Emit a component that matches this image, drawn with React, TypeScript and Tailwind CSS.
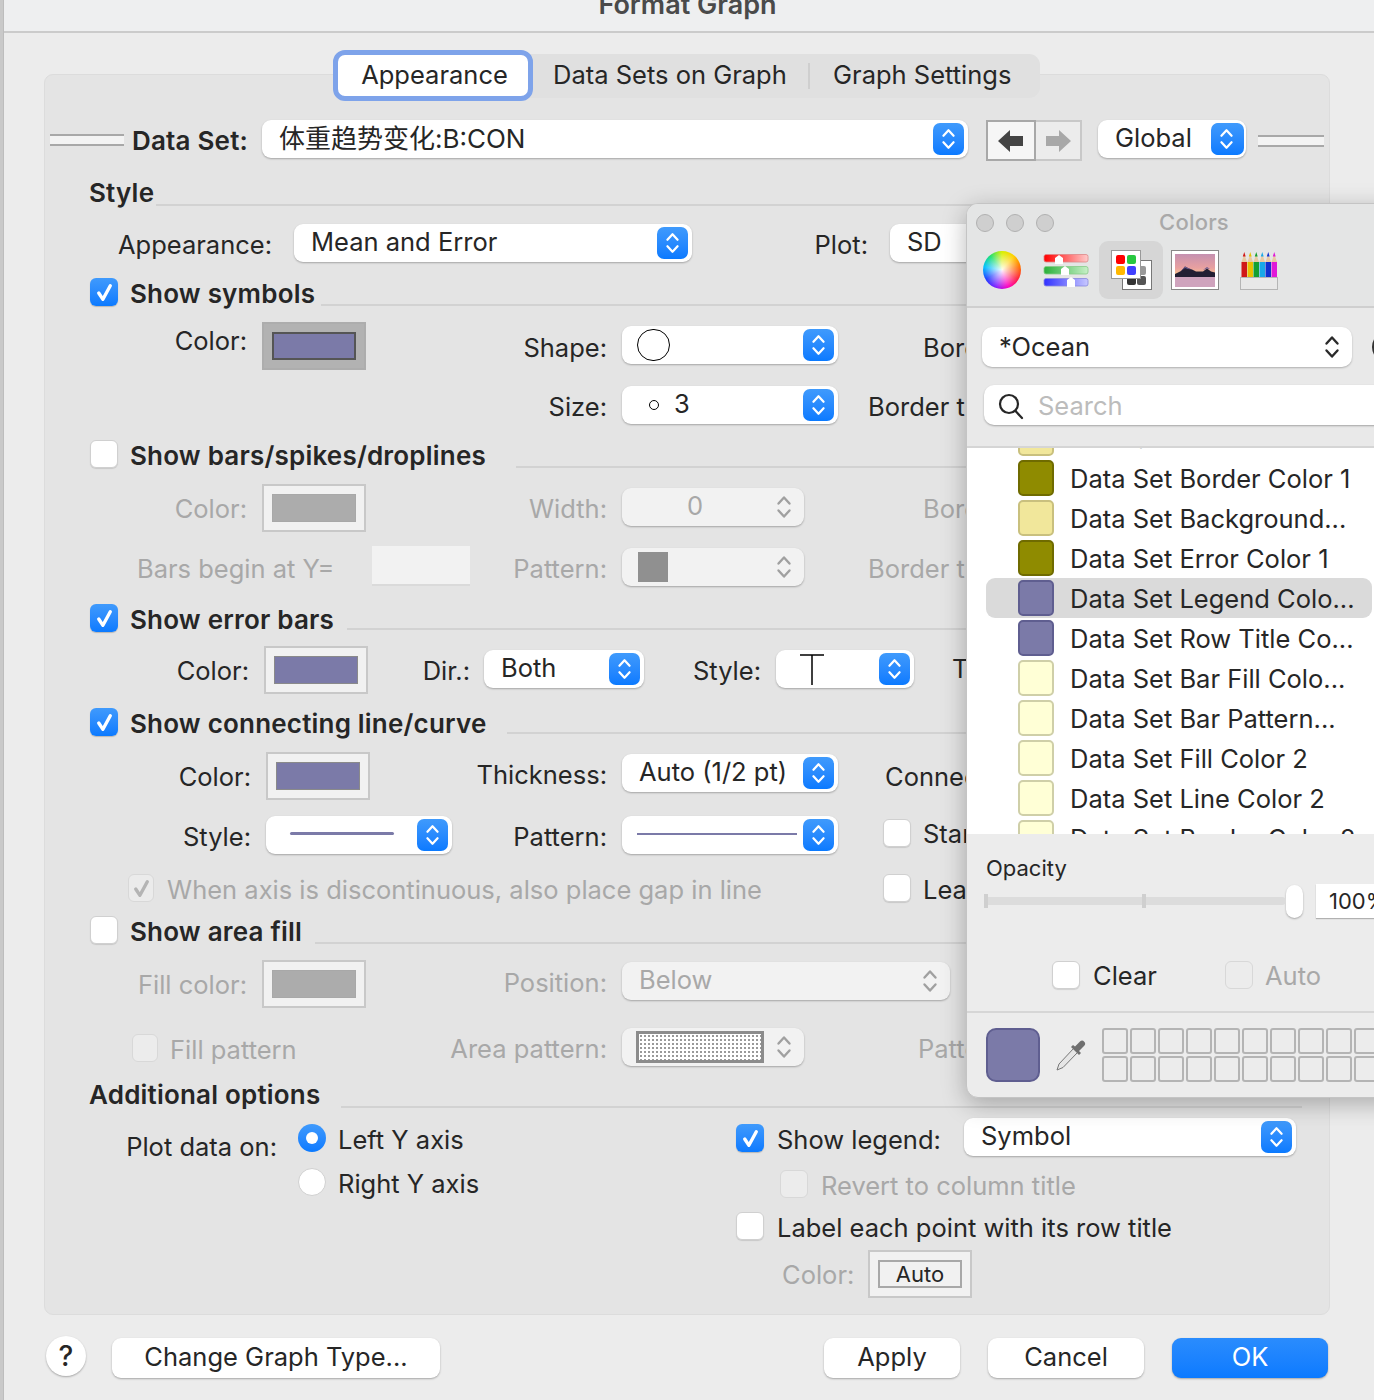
import type { ReactNode } from "react";
import clsx from "clsx";

const PURPLE = "bg-[#7b7aa8]";
const BOLD = "font-semibold text-[26px] tracking-[0.2px]";

const Lbl = ({ children, dim, className }: { children: ReactNode; dim?: boolean; className?: string }) => (
  <span className={clsx("block shrink-0 whitespace-nowrap text-right leading-[30px]", dim ? "text-[#a8a8a8]" : "text-[#262626]", className)}>
    {children}
  </span>
);

const Chevrons = ({ color = "white", className }: { color?: string; className?: string }) => (
  <svg viewBox="0 0 16 26" className={className} fill="none" stroke={color} strokeWidth="2.4" strokeLinecap="round" strokeLinejoin="round">
    <path d="M2.5 9.5 8 3.5l5.5 6" />
    <path d="M2.5 16.5 8 22.5l5.500-6" />
  </svg>
);

const Select = ({ children, disabled, className }: { children?: ReactNode; disabled?: boolean; className?: string }) => (
  <div className={clsx("relative flex h-[38px] shrink-0 items-center whitespace-nowrap rounded-[9px] pb-[1px] pl-[17px] shadow-[0_1px_2px_rgba(0,0,0,0.28)]", disabled ? "bg-[#f2f2f2] text-[#a8a8a8]" : "bg-white text-[#262626]", className)}>
    {children}
    {disabled ? (
      <Chevrons color="#a0a0a0" className="absolute right-[12px] top-[6px] h-[26px] w-[16px]" />
    ) : (
      <div className="absolute right-[4px] top-[3px] flex h-[32px] w-[31px] items-center justify-center rounded-[7px] bg-gradient-to-b from-[#3f9afc] to-[#0a7aff]">
        <Chevrons className="h-[24px] w-[15px]" />
      </div>
    )}
  </div>
);

const Check = ({ on, off, tick, className }: { on?: boolean; off?: boolean; tick?: boolean; className?: string }) => (
  <div className={clsx("flex h-[28px] w-[28px] shrink-0 items-center justify-center rounded-[6px]", on ? "bg-gradient-to-b from-[#3f9afc] to-[#0a7aff] shadow-[0_1px_1px_rgba(0,0,0,0.2)]" : off ? "border border-[#d8d8d8] bg-[#ececec]" : "border border-[#d0d0d0] bg-white shadow-[0_1px_1px_rgba(0,0,0,0.12)]", className)}>
    {(on || tick) && (
      <svg viewBox="0 0 20 20" className="h-[21px] w-[21px]" fill="none" stroke={on ? "white" : "#b4b4b4"} strokeWidth="3.2" strokeLinecap="round" strokeLinejoin="round">
        <path d="M4.500 10.500 8.500 16.500 15.500 3.500" />
      </svg>
    )}
  </div>
);

const Radio = ({ on }: { on?: boolean }) => (
  <div className={clsx("flex h-[28px] w-[28px] shrink-0 items-center justify-center rounded-full", on ? "bg-gradient-to-b from-[#3f9afc] to-[#0a7aff]" : "border border-[#d0d0d0] bg-white")}>
    {on && <div className="h-[12px] w-[12px] rounded-full bg-white" />}
  </div>
);

const Well = ({ selected, dim, className, children }: { selected?: boolean; dim?: boolean; className?: string; children?: ReactNode }) => (
  <div className={clsx("flex h-[48px] w-[104px] shrink-0 items-center justify-center border-2", selected ? "border-[#adadad] bg-[#b2b2b2]" : "border-[#c8c8c8] bg-[#f1f1f1]", className)}>
    {children ?? <div className={clsx("h-[28px] w-[84px] border", dim ? "border-[#a8a8a8] bg-[#acacac]" : PURPLE, !dim && (selected ? "border-2 border-[#555555]" : "border-[#8a8a8a]"))} />}
  </div>
);

const Double = ({ className }: { className?: string }) => (
  <div className={clsx("h-[12px] shrink-0 border-y-2 border-[#a8a8a8] bg-[#f3f3f3]", className)} />
);

const Rule = ({ className }: { className?: string }) => <div className={clsx("h-[2px] flex-1 bg-[#d2d2d2]", className)} />;

const Section = ({ on, label, labelWidth, ruleTop, h }: { on?: boolean; label: string; labelWidth: string; ruleTop: string; h: string }) => (
  <div className={clsx("flex", h)}>
    <Check on={on} className="ml-[40px]" />
    <Lbl className={clsx("ml-[12px] mt-[1px] !text-left", BOLD, labelWidth)}>{label}</Lbl>
    <Rule className={ruleTop} />
  </div>
);

const ColorWheel = () => (
  <div className="relative h-[38px] w-[38px] rounded-full bg-[conic-gradient(#d8f000,#ffd000,#ff7000,#ff2040,#ff00c0,#8020ff,#2040ff,#00c0ff,#20e070,#d8f000)]">
    <div className="absolute inset-0 rounded-full bg-[radial-gradient(circle,rgba(255,255,255,0.95)_0%,rgba(255,255,255,0)_68%)]" />
  </div>
);

const SlidersIcon = () => (
  <svg width="46" height="36" viewBox="0 0 46 36">
    <defs>
      <linearGradient id="sr"><stop offset="0" stopColor="#f00" /><stop offset="1" stopColor="#fcc" /></linearGradient>
      <linearGradient id="sg"><stop offset="0" stopColor="#2ab03a" /><stop offset="1" stopColor="#c8f0c8" /></linearGradient>
      <linearGradient id="sb"><stop offset="0" stopColor="#3030ff" /><stop offset="1" stopColor="#c8c8ff" /></linearGradient>
    </defs>
    <rect x="1" y="2.500" width="44" height="7.500" rx="2" fill="url(#sr)" stroke="#d88" strokeWidth="0.8" />
    <rect x="1" y="14.500" width="44" height="7.500" rx="2" fill="url(#sg)" stroke="#8c8" strokeWidth="0.8" />
    <rect x="1" y="26.500" width="44" height="7.500" rx="2" fill="url(#sb)" stroke="#88d" strokeWidth="0.8" />
    <path d="M16 3l4 3v6h-8V6zM22 14l4 3v6h-8v-6zM28 25l4 3v7h-8v-7z" fill="white" />
  </svg>
);

const PaletteIcon = () => (
  <svg width="42" height="40" viewBox="0 0 42 40">
    <rect x="11.500" y="10.500" width="29" height="29" fill="white" stroke="#777" />
    <rect x="26" y="16" width="9" height="9" rx="2" fill="#999" />
    <rect x="16" y="26" width="9" height="9" rx="2" fill="#333" />
    <rect x="26" y="26" width="9" height="9" rx="2" fill="#555" />
    <rect x="0.500" y="0.500" width="29" height="28" fill="white" stroke="#999" />
    <rect x="5" y="5" width="9" height="9" rx="2" fill="#ff0000" />
    <rect x="16" y="5" width="9" height="9" rx="2" fill="#28c840" />
    <rect x="5" y="16" width="9" height="9" rx="2" fill="#ffb800" />
    <rect x="16" y="16" width="9" height="9" rx="2" fill="#4040ff" />
  </svg>
);

const ImageIcon = () => (
  <svg width="48" height="40" viewBox="0 0 48 40">
    <defs>
      <linearGradient id="sky" x2="0" y2="1"><stop offset="0" stopColor="#c490b0" /><stop offset="0.6" stopColor="#e8a0a0" /><stop offset="1" stopColor="#fbd08a" /></linearGradient>
    </defs>
    <rect x="0.500" y="0.500" width="47" height="39" fill="white" stroke="#888" />
    <rect x="4" y="4" width="40" height="23" fill="url(#sky)" />
    <rect x="4" y="27" width="40" height="10" fill="#cfa3bd" />
    <path d="M4 27v-3l6-3 4-4.500 4 2 3 1 4 2 7 0 4-3 4 3 4 1v4.500z" fill="#231f33" />
    <path d="M10 21l4-4.500 4 2 3 1-4-.5-3-1zM32 20l4-3 3 2-3-.5z" fill="#6a5a90" />
  </svg>
);

const PencilsIcon = () => {
  const cols = ["#d01818", "#e8c000", "#14a030", "#18a8e8", "#1030d0", "#e018d8"];
  return (
    <svg width="38" height="40" viewBox="0 0 38 40">
      {cols.map((c, i) => (
        <g key={c}>
          <rect x={1.5 + i * 6} y="12" width="5.500" height="15" fill={c} />
          <path d={`M${1.5 + i * 6} 12l2.750-8 2.750 8z`} fill="#e9c9a0" />
          <path d={`M${2.8 + i * 6} 6.500l1.450-4.500 1.450 4.500z`} fill={c} />
        </g>
      ))}
      <rect x="0.500" y="27.500" width="37" height="12" fill="#e8e8e8" stroke="#b5b5b5" />
    </svg>
  );
};

const Eyedropper = () => (
  <svg width="32" height="32" viewBox="0 0 32 32">
    <path d="M19 9 23 13 8 28.500 2 31 4 25z" fill="#e6e6e6" stroke="#777" strokeWidth="1" />
    <path d="M16 8l8 8 2-2-2-2 5-5a3 3 0 0 0-4-4.500L20 7.500 18 6z" fill="#6f6f6f" />
  </svg>
);

const swatches: [string, string, string][] = [
  ["Data Set Line Color 1", "bg-[#f1e79b] border-[#c9c07e]", ""],
  ["Data Set Border Color 1", "bg-[#8f8b00] border-[#6f6b00]", ""],
  ["Data Set Background...", "bg-[#f1e79b] border-[#c9c07e]", ""],
  ["Data Set Error Color 1", "bg-[#8f8b00] border-[#6f6b00]", ""],
  ["Data Set Legend Colo...", "bg-[#7b7aa8] border-[#5f5e90]", "bg-[#dadada]"],
  ["Data Set Row Title Co...", "bg-[#7b7aa8] border-[#5f5e90]", ""],
  ["Data Set Bar Fill Colo...", "bg-[#ffffd6] border-[#cfcfa8]", ""],
  ["Data Set Bar Pattern...", "bg-[#ffffd6] border-[#cfcfa8]", ""],
  ["Data Set Fill Color 2", "bg-[#ffffd6] border-[#cfcfa8]", ""],
  ["Data Set Line Color 2", "bg-[#ffffd6] border-[#cfcfa8]", ""],
  ["Data Set Border Color 2", "bg-[#ffffd6] border-[#cfcfa8]", ""],
];

const ColorsPanel = () => (
  <div className="absolute left-[966px] top-[203px] z-20 flex h-[895px] w-[456px] flex-col overflow-hidden rounded-[12px] border border-[#c4c4c4] bg-[#ececec] shadow-[0_6px_24px_rgba(0,0,0,0.28)]">
    <div className="h-[104px] shrink-0 border-b-2 border-[#cfcfcf] bg-[#e4e5e5]">
      <div className="relative flex h-[37px] items-center pl-[9px]">
        <div className="flex gap-[12px]">
          <div className="h-[18px] w-[18px] rounded-full border border-[#b0b0b0] bg-[#cfcfcf]" />
          <div className="h-[18px] w-[18px] rounded-full border border-[#b0b0b0] bg-[#cfcfcf]" />
          <div className="h-[18px] w-[18px] rounded-full border border-[#b0b0b0] bg-[#cfcfcf]" />
        </div>
        <span className="absolute inset-x-0 text-center text-[22px] font-medium tracking-[0.2px] text-[#a9a9a9]">Colors</span>
      </div>
      <div className="flex items-center pl-[16px]">
        <ColorWheel />
        <div className="ml-[22px]"><SlidersIcon /></div>
        <div className="ml-[10px] flex h-[58px] w-[64px] items-center justify-center rounded-[9px] bg-[#d6d6d6] pl-[1px]"><PaletteIcon /></div>
        <div className="ml-[8px]"><ImageIcon /></div>
        <div className="ml-[21px]"><PencilsIcon /></div>
      </div>
    </div>
    <div className="relative h-[138px] shrink-0 bg-[#e9e9e9]">
      <div className="ml-[15px] mt-[19px] flex h-[40px] w-[370px] items-center justify-between rounded-[10px] bg-white pl-[17px] pr-[12px] text-[#262626] shadow-[0_1px_2px_rgba(0,0,0,0.25)]">
        <span>*Ocean</span>
        <Chevrons color="#2a2a2a" className="h-[26px] w-[16px]" />
      </div>
      <div className="absolute left-[405px] top-[23px] h-[32px] w-[32px] rounded-full border-2 border-[#333333]" />
      <div className="ml-[17px] mt-[18px] flex h-[40px] w-[440px] items-center rounded-[10px] bg-white pl-[14px] pt-[2px] text-[#bcbcbc] shadow-[0_1px_2px_rgba(0,0,0,0.3)]">
        <svg width="26" height="28" viewBox="0 0 26 28" fill="none" stroke="#262626" strokeWidth="2.200" strokeLinecap="round">
          <circle cx="11" cy="12" r="9" />
          <path d="M17.500 19 24 26" />
        </svg>
        <span className="ml-[14px]">Search</span>
      </div>
    </div>
    <div className="h-[388px] shrink-0 overflow-hidden border-t-2 border-[#d5d5d5] bg-white">
      <div className="-mt-[30px]">
        {swatches.map(([name, sw, row]) => (
          <div key={name} className={clsx("ml-[19px] flex h-[40px] w-[386px] items-center rounded-[9px] pl-[32px]", row)}>
            <div className={clsx("h-[36px] w-[36px] shrink-0 rounded-[5px] border-2", sw)} />
            <span className="ml-[16px] mt-[2px] whitespace-nowrap text-[#262626]">{name}</span>
          </div>
        ))}
      </div>
    </div>
    <div className="flex flex-1 flex-col">
      <div className="ml-[19px] mt-[19px] text-[22px] leading-[30px] text-[#262626]">Opacity</div>
      <div className="ml-[17px] mt-[1px] flex h-[34px] items-center">
        <div className="relative h-[8px] w-[302px] rounded-full bg-[#dcdcdc]">
          <div className="absolute -top-[3px] left-0 h-[14px] w-[4px] bg-[#cfcfcf]" />
          <div className="absolute -top-[3px] left-[158px] h-[14px] w-[4px] bg-[#cfcfcf]" />
        </div>
        <div className="h-[33px] w-[17px] rounded-full bg-white shadow-[0_1px_2px_rgba(0,0,0,0.3)]" />
        <div className="ml-[13px] flex h-[34px] w-[80px] items-center bg-white pl-[13px] text-[22px] leading-none text-[#262626] shadow-[0_1px_1px_rgba(0,0,0,0.25)]">100%</div>
      </div>
      <div className="ml-[85px] mt-[43px] flex h-[28px] items-center">
        <Check />
        <span className="ml-[13px] mt-[2px] w-[62px] text-[#262626]">Clear</span>
        <Check off className="ml-[70px]" />
        <span className="ml-[12px] mt-[2px] text-[#a8a8a8]">Auto</span>
      </div>
      <div className="mt-[22px] h-[2px] bg-[#d6d6d6]" />
      <div className="ml-[19px] mt-[15px] flex items-start">
        <div className="h-[54px] w-[54px] shrink-0 rounded-[10px] border-2 border-[#5f5e90] bg-[#7b7aa8]" />
        <div className="ml-[15px] mt-[11px] shrink-0"><Eyedropper /></div>
        <div className="ml-[15px] grid grid-cols-[repeat(11,26px)] gap-[2px]">
          {Array.from({ length: 22 }, (_, i) => (
            <div key={i} className="h-[26px] w-[26px] rounded-[3px] border-2 border-[#b4b4b4]" />
          ))}
        </div>
      </div>
    </div>
  </div>
);

const Button = ({ children, className }: { children: ReactNode; className?: string }) => (
  <div className={clsx("flex h-[40px] shrink-0 items-center justify-center whitespace-nowrap rounded-[9px] bg-white pb-[2px] text-[#262626] shadow-[0_1px_2px_rgba(0,0,0,0.3)]", className)}>
    {children}
  </div>
);

export default function App() {
  return (
    <div className="relative flex h-[1400px] w-[1374px] overflow-hidden bg-[#c9c9c9] font-['Inter','Noto_Sans_CJK_SC',sans-serif] text-[25.5px]">
      <div className="ml-[3px] w-[1371px] shrink-0 border-l border-[#bdbdbd] bg-[#ececec]">
        <div className="flex h-[33px] items-end justify-center overflow-hidden border-b-2 border-[#cbcbcb] bg-[#eeeff0] pb-[11px]">
          <span className="-ml-[3px] shrink-0 text-[27px] font-semibold leading-[30px] text-[#4a4a4a]">Format Graph</span>
        </div>

        <div className="relative z-10 ml-[329px] mt-[17px] flex h-[51px] items-center">
          <div className="relative z-10 flex h-[51px] w-[200px] items-center justify-center rounded-[12px] border-[5px] border-[#7ea3ea] bg-white pl-[3px] text-[#262626]">Appearance</div>
          <div className="-ml-[8px] flex h-[44px] w-[515px] items-center rounded-r-[11px] bg-[#e0e0e0] pl-[28px] text-[#262626]">
            <span className="w-[255px] whitespace-nowrap">Data Sets on Graph</span>
            <div className="h-[26px] w-[2px] bg-[#cfcfcf]" />
            <span className="ml-[23px] whitespace-nowrap">Graph Settings</span>
          </div>
        </div>

        <div className="-mt-[27px] ml-[40px] h-[1241px] w-[1286px] rounded-[9px] border border-[#dcdcdc] bg-[#e4e4e4] pl-[5px] pt-[44px]">
          <div className="w-[1252px]">
            <div className="flex h-[59px]">
              <Double className="mt-[15px] w-[74px]" />
              <Lbl className={clsx("mt-[7px] w-[124px]", BOLD)}>Data Set:</Lbl>
              <Select className="ml-[14px] mt-[1px] w-[706px] text-[26px]">体重趋势变化:B:CON</Select>
              <div className="ml-[18px] mt-[1px] flex h-[41px] w-[96px] shrink-0">
                <div className="flex w-[50px] items-center justify-center border-2 border-[#a8a8a8] bg-[#f6f6f6]">
                  <svg width="26" height="22" viewBox="0 0 26 22"><path d="M0 11 12 0v6h13v10H12v6z" fill="#444444" /></svg>
                </div>
                <div className="flex w-[46px] items-center justify-center border-2 border-l-0 border-[#c8c8c8] bg-[#ececec]">
                  <svg width="26" height="22" viewBox="0 0 26 22"><path d="M26 11 14 0v6H1v10h13v6z" fill="#a8a8a8" /></svg>
                </div>
              </div>
              <Select className="ml-[16px] mt-[1px] w-[148px]">
                Global
                <div className="absolute right-[2px] top-[3px] flex h-[32px] w-[32px] items-center justify-center rounded-[7px] bg-gradient-to-b from-[#3f9afc] to-[#0a7aff]">
                  <svg width="16" height="10" viewBox="0 0 16 10" fill="none" stroke="white" strokeWidth="2.400" strokeLinecap="round" strokeLinejoin="round"><path d="M2.500 2 8 8l5.500-6" /></svg>
                </div>
              </Select>
              <Double className="ml-[12px] mt-[16px] w-[66px]" />
            </div>

            <div className="flex h-[46px]">
              <Lbl className={clsx("ml-[39px] w-[67px] !text-left", BOLD)}>Style</Lbl>
              <Rule className="mt-[26px]" />
            </div>

            <div className="flex h-[54px]">
              <Lbl className="mt-[6px] w-[222px]">Appearance:</Lbl>
              <Select className="ml-[22px] w-[398px]">Mean and Error</Select>
              <Lbl className="mt-[6px] w-[176px]">Plot:</Lbl>
              <Select className="ml-[22px] w-[200px]">SD</Select>
            </div>

            <Section on label="Show symbols" labelWidth="w-[191px]" ruleTop="mt-[26px]" h="h-[44px]" />

            <div className="flex h-[64px]">
              <Lbl className="mt-[4px] w-[197px]">Color:</Lbl>
              <Well selected className="ml-[15px]" />
              <Lbl className="mt-[11px] w-[241px]">Shape:</Lbl>
              <Select className="ml-[15px] mt-[4px] w-[216px]">
                <div className="-ml-[2px] h-[32px] w-[33px] rounded-full border border-black" />
              </Select>
              <Lbl className="ml-[85px] mt-[11px]">Border:</Lbl>
            </div>

            <div className="flex h-[54px]">
              <Lbl className="mt-[6px] w-[557px]">Size:</Lbl>
              <Select className="ml-[15px] w-[216px]">
                <div className="ml-[10px] h-[10px] w-[10px] rounded-full border border-black" />
                <span className="ml-[15px]">3</span>
              </Select>
              <Lbl className="ml-[30px] mt-[6px]">Border thickness:</Lbl>
            </div>

            <Section label="Show bars/spikes/droplines" labelWidth="w-[386px]" ruleTop="mt-[26px]" h="h-[44px]" />

            <div className="flex h-[62px]">
              <Lbl dim className="mt-[10px] w-[197px]">Color:</Lbl>
              <Well dim className="ml-[15px]" />
              <Lbl dim className="mt-[10px] w-[241px]">Width:</Lbl>
              <Select disabled className="ml-[15px] mt-[4px] w-[182px]">
                <span className="ml-[48px]">0</span>
              </Select>
              <Lbl dim className="ml-[119px] mt-[10px]">Border:</Lbl>
            </div>

            <div className="flex h-[58px]">
              <Lbl dim className="ml-[87px] mt-[8px] w-[196px] !text-left">Bars begin at Y=</Lbl>
              <div className="ml-[39px] h-[40px] w-[98px] shrink-0 border-b-2 border-[#dadada] bg-[#f2f2f2]" />
              <Lbl dim className="mt-[8px] w-[137px]">Pattern:</Lbl>
              <Select disabled className="ml-[15px] mt-[2px] w-[182px] !pl-[16px]">
                <div className="h-[30px] w-[30px] bg-[#909090]" />
              </Select>
              <Lbl dim className="ml-[64px] mt-[8px]">Border thickness:</Lbl>
            </div>

            <Section on label="Show error bars" labelWidth="w-[217px]" ruleTop="mt-[24px]" h="h-[42px]" />

            <div className="flex h-[62px]">
              <Lbl className="mt-[10px] w-[199px]">Color:</Lbl>
              <Well className="ml-[15px]" />
              <Lbl className="mt-[10px] w-[102px]">Dir.:</Lbl>
              <Select className="ml-[14px] mt-[4px] w-[160px]">Both</Select>
              <Lbl className="mt-[10px] w-[117px]">Style:</Lbl>
              <Select className="ml-[15px] mt-[4px] w-[138px]">
                <svg width="24" height="32" viewBox="0 0 24 32" className="ml-[7px]" stroke="black" strokeWidth="1.500"><path d="M0 2h24M12 2v30" /></svg>
              </Select>
              <Lbl className="ml-[38px] mt-[8px]">Thickness:</Lbl>
            </div>

            <Section on label="Show connecting line/curve" labelWidth="w-[377px]" ruleTop="mt-[24px]" h="h-[44px]" />

            <div className="flex h-[64px]">
              <Lbl className="mt-[10px] w-[201px]">Color:</Lbl>
              <Well className="ml-[15px]" />
              <Lbl className="mt-[8px] w-[237px]">Thickness:</Lbl>
              <Select className="ml-[15px] mt-[2px] w-[216px]">Auto (1/2 pt)</Select>
              <Lbl className="ml-[47px] mt-[10px]">Connect:</Lbl>
            </div>

            <div className="flex h-[58px]">
              <Lbl className="mt-[6px] w-[201px]">Style:</Lbl>
              <Select className="ml-[15px] w-[186px]">
                <div className="ml-[7px] -mt-[2px] h-[3px] w-[104px] rounded-full bg-[#7b7aa8]" />
              </Select>
              <Lbl className="mt-[6px] w-[155px]">Pattern:</Lbl>
              <Select className="ml-[15px] w-[216px] !pl-[15px]">
                <div className="-mt-[2px] h-[2px] w-[160px] bg-[#7b7aa8]" />
              </Select>
              <Check className="ml-[45px] mt-[3px]" />
              <Lbl className="ml-[12px] mt-[3px]">Start</Lbl>
            </div>

            <div className="flex h-[42px]">
              <Check off tick className="ml-[78px] !w-[26px] !bg-[#ebebeb]" />
              <div className="ml-[13px] flex w-[716px] shrink-0 items-start">
                <Lbl dim className="mt-[1px]">When axis is discontinuous, also place gap in line</Lbl>
              </div>
              <Check />
              <Lbl className="ml-[12px] mt-[1px]">Leave</Lbl>
            </div>

            <Section label="Show area fill" labelWidth="w-[185px]" ruleTop="mt-[26px]" h="h-[44px]" />

            <div className="flex h-[68px]">
              <Lbl dim className="mt-[10px] w-[197px]">Fill color:</Lbl>
              <Well dim className="ml-[15px]" />
              <Lbl dim className="mt-[8px] w-[241px]">Position:</Lbl>
              <Select disabled className="ml-[15px] mt-[2px] w-[328px]">Below</Select>
            </div>

            <div className="flex h-[52px]">
              <Check off className="ml-[82px] mt-[6px] !w-[26px]" />
              <Lbl dim className="ml-[12px] mt-[7px] w-[140px] !text-left">Fill pattern</Lbl>
              <Lbl dim className="mt-[6px] w-[297px]">Area pattern:</Lbl>
              <Select disabled className="ml-[15px] w-[182px] !pl-[14px]">
                <div className="h-[32px] w-[128px] border-[3px] border-[#8c8c8c] bg-white bg-[radial-gradient(#999999_0.9px,transparent_1.1px)] bg-[length:4px_4px]" />
              </Select>
              <Lbl dim className="ml-[114px] mt-[6px]">Pattern:</Lbl>
            </div>

            <div className="flex h-[38px]">
              <Lbl className={clsx("ml-[39px] w-[252px] !text-left", BOLD)}>Additional options</Lbl>
              <Rule className="mt-[26px]" />
            </div>

            <div className="flex">
              <div className="flex w-[686px] shrink-0">
                <Lbl className="mt-[14px] w-[227px]">Plot data on:</Lbl>
                <div className="ml-[21px] mt-[6px] flex flex-col gap-[16px]">
                  <div className="flex h-[28px] items-center">
                    <Radio on />
                    <span className="ml-[12px] mt-[4px] text-[#262626]">Left Y axis</span>
                  </div>
                  <div className="flex h-[28px] items-center">
                    <Radio />
                    <span className="ml-[12px] mt-[4px] text-[#262626]">Right Y axis</span>
                  </div>
                </div>
              </div>
              <div className="flex flex-col">
                <div className="flex h-[52px]">
                  <Check on className="mt-[6px]" />
                  <Lbl className="ml-[13px] mt-[7px] w-[187px] !text-left">Show legend:</Lbl>
                  <Select className="w-[332px]">Symbol</Select>
                </div>
                <div className="flex h-[42px]">
                  <Check off className="ml-[44px]" />
                  <Lbl dim className="ml-[13px] mt-[1px]">Revert to column title</Lbl>
                </div>
                <div className="flex h-[38px]">
                  <Check />
                  <Lbl className="ml-[13px] mt-[1px]">Label each point with its row title</Lbl>
                </div>
                <div className="flex">
                  <Lbl dim className="ml-[46px] mt-[10px] w-[72px] !text-left">Color:</Lbl>
                  <Well className="ml-[14px]">
                    <div className="flex h-[28px] w-[84px] items-center justify-center border-2 border-[#a8a8a8] text-[22px] leading-none text-[#262626]">Auto</div>
                  </Well>
                </div>
              </div>
            </div>
          </div>
        </div>

        <div className="ml-[42px] mt-[21px] flex items-start">
          <div className="flex h-[40px] w-[40px] items-center justify-center rounded-full bg-white text-[28px] font-medium text-[#262626] shadow-[0_1px_2px_rgba(0,0,0,0.3)]">?</div>
          <Button className="ml-[26px] mt-[2px] w-[328px]">Change Graph Type...</Button>
          <Button className="ml-[384px] mt-[2px] w-[136px]">Apply</Button>
          <Button className="ml-[28px] mt-[2px] w-[156px]">Cancel</Button>
          <Button className="ml-[28px] mt-[2px] w-[156px] !bg-[#0a7aff] !bg-gradient-to-b from-[#2a8cfd] to-[#0a7aff] !text-white">OK</Button>
        </div>
      </div>
      <ColorsPanel />
    </div>
  );
}
